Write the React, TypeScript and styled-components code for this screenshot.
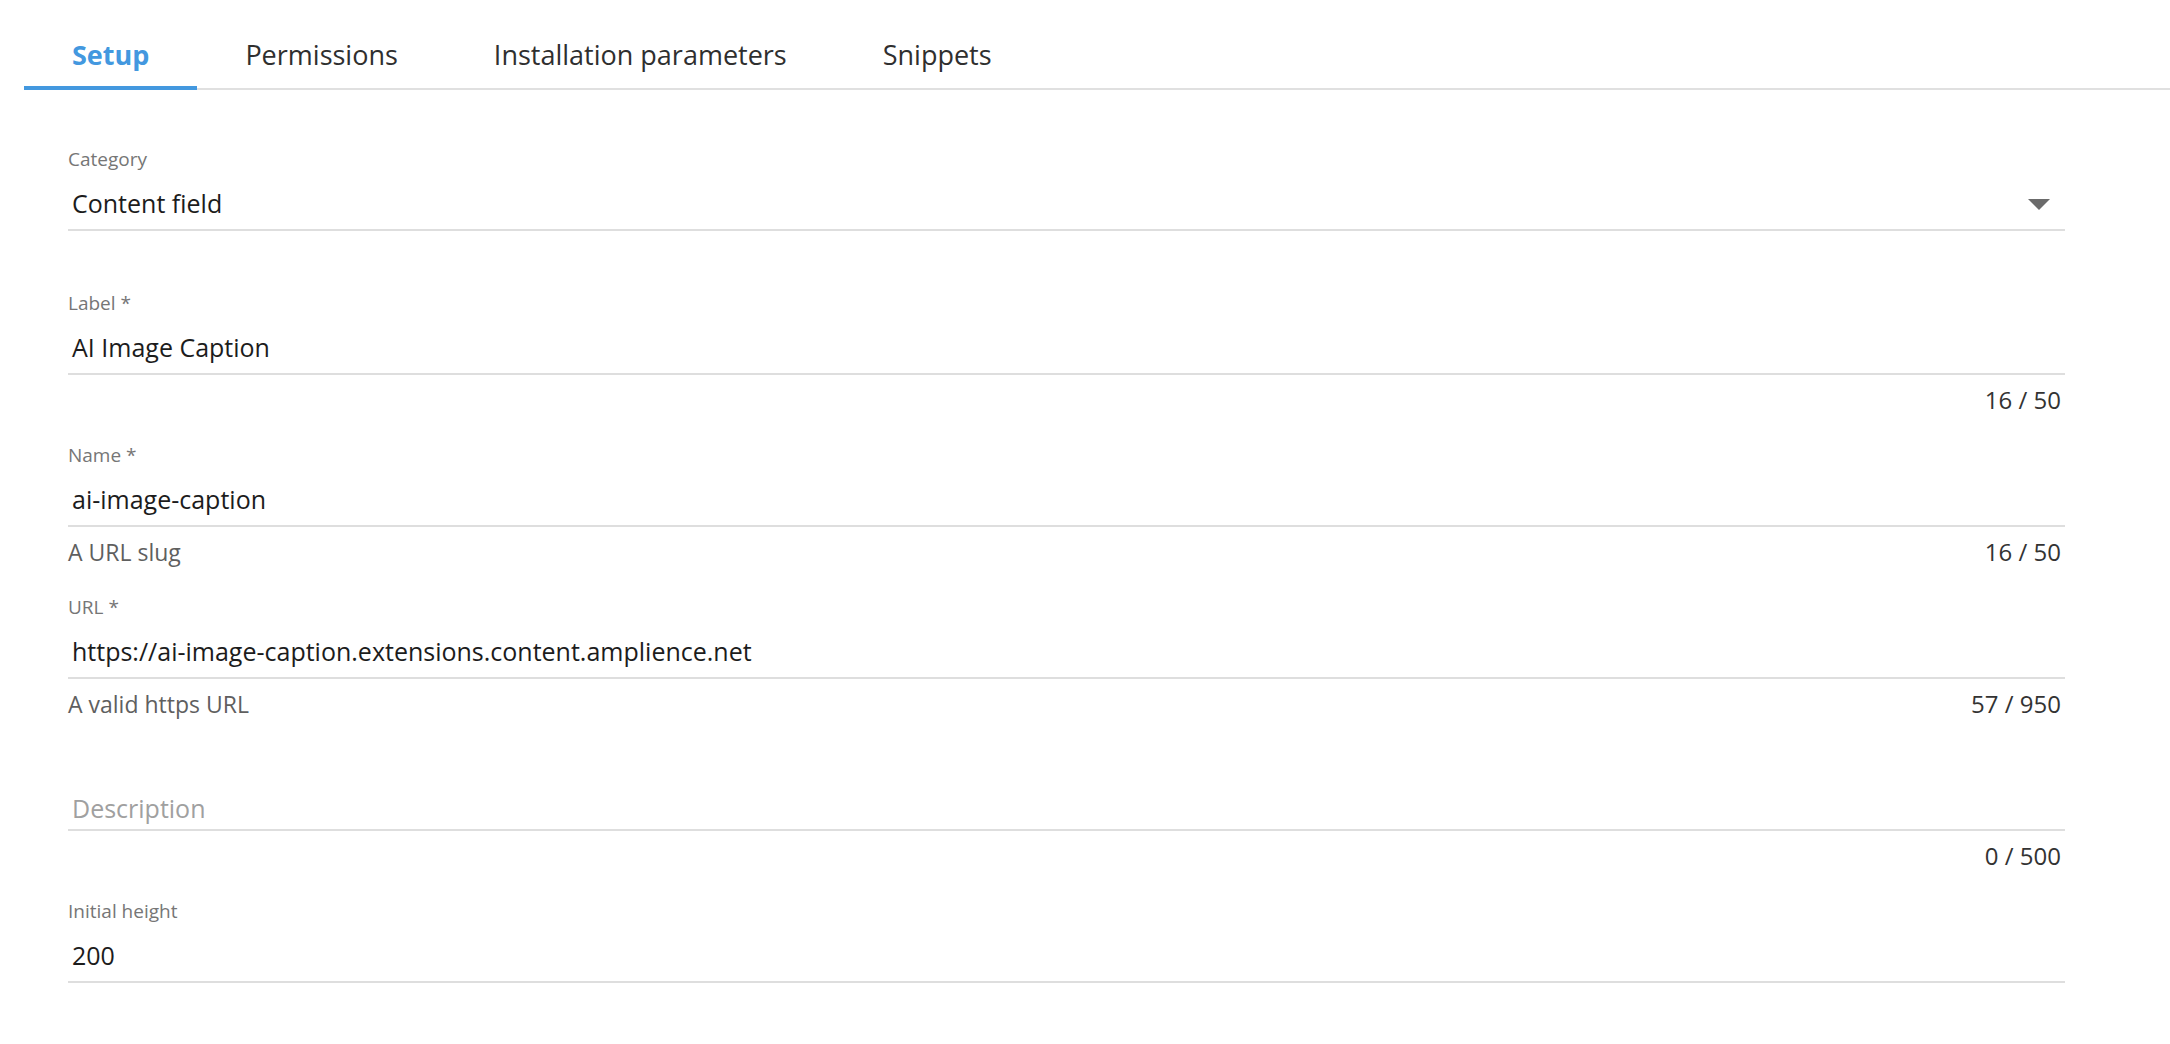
import React from "react";
import styled, { createGlobalStyle } from "styled-components";

const GlobalStyle = createGlobalStyle`
  html, body {
    margin: 0;
    padding: 0;
    background: #fff;
  }
  body {
    font-family: "Open Sans", "Noto Sans", "Liberation Sans", sans-serif;
    color: #1f1f1f;
  }
`;

const Page = styled.div`
  width: 100%;
  min-height: 100vh;
  background: #fff;
`;

const TabBar = styled.div`
  display: flex;
  margin-left: 24px;
  box-shadow: inset 0 -2px 0 #e0e0e0;
`;

const Tab = styled.div<{ $active?: boolean }>`
  box-sizing: border-box;
  height: 90px;
  padding: 22px 48px 0;
  display: flex;
  align-items: center;
  font-size: 27px;
  font-weight: ${(p) => (p.$active ? 700 : 400)};
  color: ${(p) => (p.$active ? "#4398df" : "#2f2f2f")};
  border-bottom: 4px solid ${(p) => (p.$active ? "#4398df" : "transparent")};
  cursor: pointer;
`;

const Form = styled.div`
  width: 1997px;
  margin: 58px 0 0 68px;
`;

const Field = styled.div<{ $gap?: number }>`
  margin-bottom: ${(p) => p.$gap ?? 32}px;
`;

const Label = styled.div`
  height: 22px;
  font-size: 19px;
  line-height: 22px;
  color: #767676;
`;

const InputRow = styled.div`
  display: flex;
  align-items: center;
  margin-top: 17px;
  border-bottom: 2px solid #dedede;
`;

const Value = styled.div<{ $placeholder?: boolean }>`
  flex: 1;
  padding: ${(p) => (p.$placeholder ? "5px 4px 5px" : "0 4px 10px")};
  font-size: 25px;
  line-height: 32px;
  color: ${(p) => (p.$placeholder ? "#a0a0a0" : "#1c1c1c")};
`;

const Caret = styled.div`
  width: 0;
  height: 0;
  margin: 0 15px 8px 0;
  border-left: 11px solid transparent;
  border-right: 11px solid transparent;
  border-top: 11px solid #6b6b6b;
`;

const HelperRow = styled.div`
  display: flex;
  justify-content: space-between;
  align-items: center;
  margin-top: 13px;
  padding-right: 4px;
  height: 24px;
  line-height: 24px;
`;

const Helper = styled.span`
  font-size: 23px;
  color: #5f5f5f;
`;

const Counter = styled.span`
  font-size: 24px;
  color: #333;
`;

type FieldProps = {
  label?: string;
  value?: string;
  placeholder?: string;
  helper?: string;
  counter?: string;
  select?: boolean;
  gap?: number;
};

const TextField: React.FC<FieldProps> = ({ label, value, placeholder, helper, counter, select, gap }) => (
  <Field $gap={gap}>
    <Label>{label}</Label>
    <InputRow>
      {value ? <Value>{value}</Value> : <Value $placeholder>{placeholder}</Value>}
      {select && <Caret />}
    </InputRow>
    {(helper || counter) && (
      <HelperRow>
        <Helper>{helper}</Helper>
        <Counter>{counter}</Counter>
      </HelperRow>
    )}
  </Field>
);

const tabs = ["Setup", "Permissions", "Installation parameters", "Snippets"];

const App: React.FC = () => {
  return (
    <Page>
      <GlobalStyle />
      <TabBar>
        {tabs.map((t, i) => (
          <Tab key={t} $active={i === 0}>
            {t}
          </Tab>
        ))}
      </TabBar>
      <Form>
        <TextField label="Category" value="Content field" select gap={61} />
        <TextField label="Label *" value="AI Image Caption" counter="16 / 50" />
        <TextField label="Name *" value="ai-image-caption" helper="A URL slug" counter="16 / 50" />
        <TextField
          label="URL *"
          value="https://ai-image-caption.extensions.content.amplience.net"
          helper="A valid https URL"
          counter="57 / 950"
        />
        <TextField placeholder="Description" counter="0 / 500" />
        <TextField label="Initial height" value="200" />
      </Form>
    </Page>
  );
};

export default App;
